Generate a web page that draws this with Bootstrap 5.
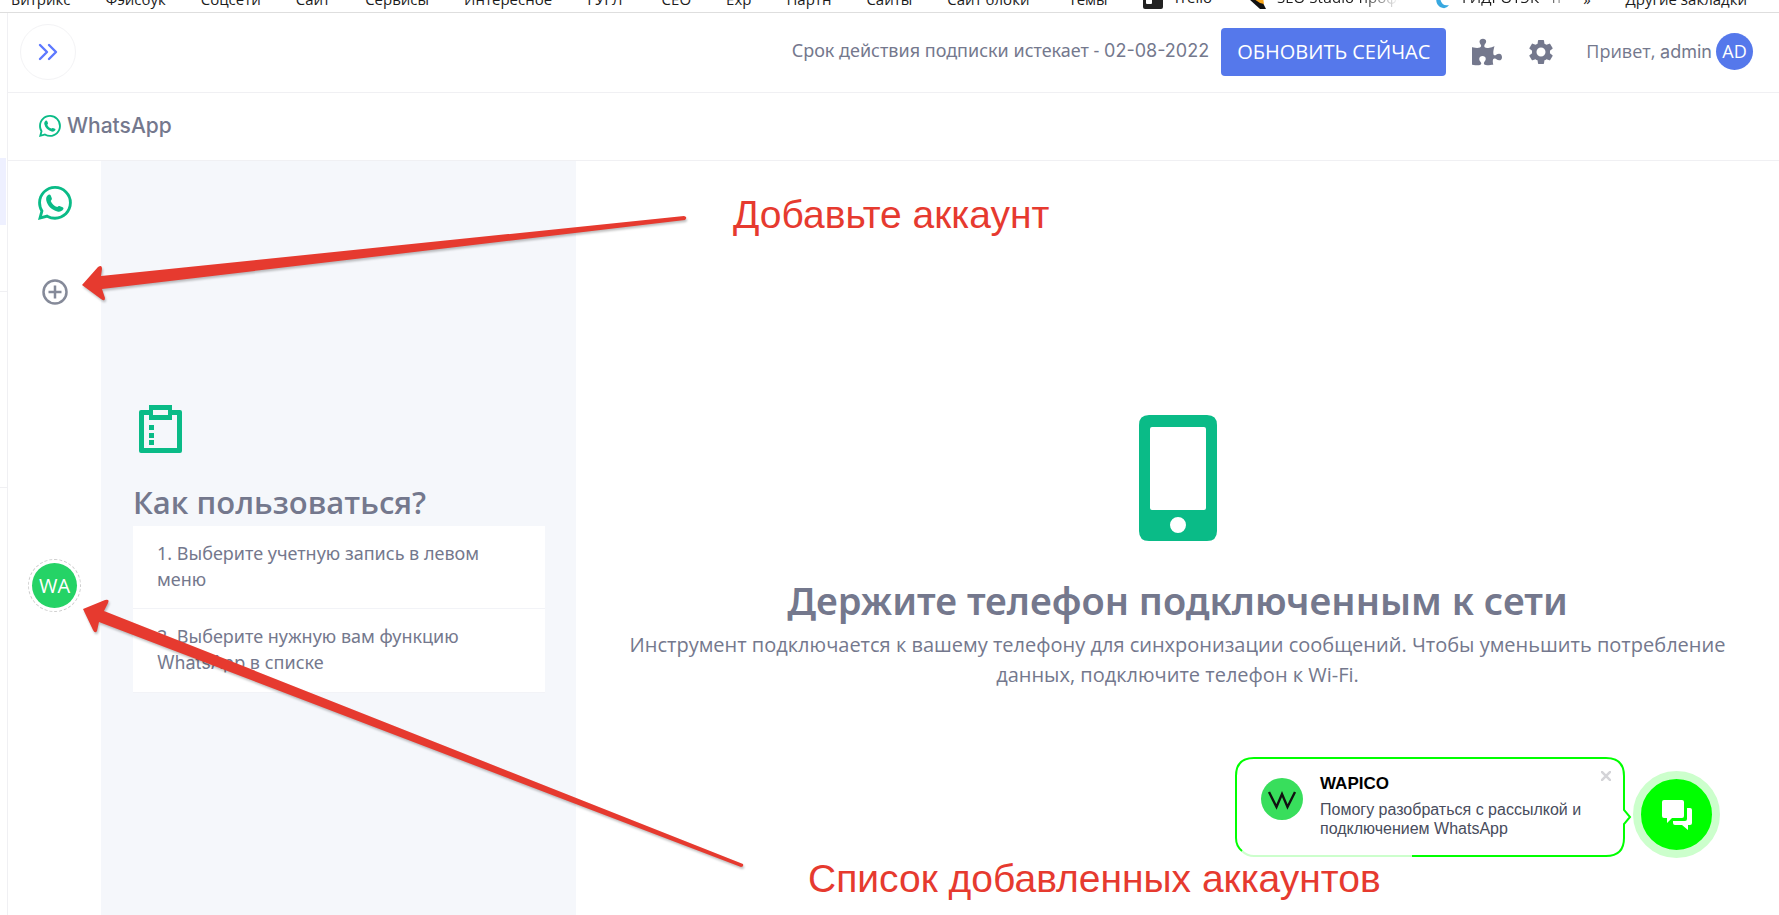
<!DOCTYPE html>
<html lang="ru">
<head>
<meta charset="utf-8">
<meta name="viewport" content="width=device-width, initial-scale=1">
<title>WhatsApp</title>
<link href="https://cdn.jsdelivr.net/npm/bootstrap@5.3.0/dist/css/bootstrap.min.css" rel="stylesheet">
<style>
  :root { --ink: #74788d; --green: #0abb87; --line: #f0f0f3; --red: #e63a2f; --lime: #00ff00; }
  html, body { height: 100%; }
  body { font-family: "Open Sans", "Noto Sans", sans-serif; color: var(--ink); background: #fff; overflow: hidden; position: relative; }
  .latin { font-family: Inter, "Noto Sans", sans-serif; }
  .bookmarks { height: 13px; overflow: hidden; border-bottom: 1px solid #dedede; font-size: 15px; line-height: 20px; padding: 0 32px 0 11px; }
  .bm-group { gap: 35px; }
  .bookmarks a { color: #1c1c1c; text-decoration: none; white-space: nowrap; margin-bottom: 3px; }
  .bookmarks svg { margin-right: 10px; }
  .bookmarks .fade-end { overflow: hidden; -webkit-mask-image: linear-gradient(90deg, #000 75%, transparent); mask-image: linear-gradient(90deg, #000 75%, transparent); }
  .fade-long { width: 152px; }
  .fade-short { width: 142px; }
  .side-edge { width: 8px; border-right: 1px solid var(--line); }
  .edge-gap { height: 145px; }
  .edge-active { height: 67px; background: #eef0ff; margin-right: 1px; }
  .edge-row { border-bottom: 1px solid var(--line); }
  .edge-a { height: 67px; }
  .edge-b { height: 196px; }
  .topbar { height: 80px; border-bottom: 1px solid var(--line); padding: 0 26px 2px 12px; }
  .toggle-btn { width: 56px; height: 56px; border: 1px solid #f3f3f5; border-radius: 50%; background: #fff; }
  .sub-note { font-family: "Noto Sans", sans-serif; font-size: 18px; line-height: 28px; margin-right: 12px; padding-bottom: 3px; }
  .btn-renew { background: #5578eb; color: #fff; font-size: 20px; line-height: 28px; padding: 10px 16px; margin-right: 26px; border: 0; border-radius: 4px; }
  .icon-btn { background: none; border: 0; padding: 0; color: var(--ink); line-height: 0; }
  .hello { font-size: 18px; margin-left: 30px; }
  .ava { width: 37px; height: 37px; border-radius: 50%; background: #5578eb; color: #fff; font-size: 18px; }
  .titlebar { height: 68px; border-bottom: 1px solid var(--line); padding: 0 0 2px 31px; gap: 6px; font-size: 21px; font-weight: 500; }
  .rail { width: 93px; }
  .rail-gap-a { margin-top: 25px; }
  .rail-gap-b { margin-top: 59px; }
  .rail-gap-c { margin-top: 254px; }
  .wa-ava { width: 53px; height: 53px; border: 1px dashed #ccc; border-radius: 50%; padding: 3px; background: #fff; }
  .wa-ava span { width: 45px; height: 45px; border-radius: 50%; background: #25d366; color: #fff; font-size: 20px; }
  .guide { width: 475px; background: #f5f7fb; padding: 240px 31px 0 32px; }
  .guide h2 { font-size: 31px; line-height: 40px; font-weight: 600; margin: 27px 0 4px; }
  .guide .list-group { --bs-list-group-border-color: #f2f3f7; --bs-list-group-color: var(--ink); }
  .guide .list-group-item { padding: 14px 24px 16px; font-family: "Noto Sans", sans-serif; font-size: 18px; line-height: 26px; border-width: 0 0 1px; }
  .phone-pane { padding: 254px 40px 0; }
  .phone-pane h1 { font-family: "Noto Sans", sans-serif; font-size: 38px; line-height: 50px; font-weight: 600; margin: 34px 0 5px; }
  .phone-pane p { font-size: 20px; line-height: 30px; }
  .callout-text { position: absolute; font-family: "Liberation Sans", Arial, sans-serif; color: var(--red); font-size: 39px; line-height: 44px; white-space: nowrap; }
  .note-a { left: 733px; top: 193px; }
  .note-b { left: 808px; top: 857px; }
  .arrows { position: absolute; left: 0; top: 0; pointer-events: none; filter: drop-shadow(1px 2px 1px rgba(0,0,0,.25)); }
  .chat { position: absolute; right: 59px; bottom: 57px; font-family: "Liberation Sans", Arial, sans-serif; }
  .bubble { width: 398px; height: 100px; padding: 17px 26px 0; }
  .bubble > svg.frame { position: absolute; left: 0; top: 0; }
  .bubble-text { margin-left: 17px; }
  .bubble strong { font-size: 17px; line-height: 20px; color: #000; }
  .bubble p { font-size: 16px; line-height: 19px; color: #484c5c; margin: 6px 0 0; white-space: nowrap; }
  .bubble .close-x { position: absolute; right: 22px; top: 14px; }
  .chat-btn { width: 87px; height: 87px; margin-top: 14px; border-radius: 50%; border: 8px solid #ccffcc; background: var(--lime); padding: 0; }
</style>
</head>
<body class="d-flex flex-column">
<svg width="0" height="0" class="position-absolute" aria-hidden="true">
  <symbol id="wa" viewBox="0 0 16 16"><path fill="currentColor" d="M13.601 2.326A7.854 7.854 0 0 0 7.994 0C3.627 0 .068 3.558.064 7.926c0 1.399.366 2.76 1.057 3.965L0 16l4.204-1.102a7.933 7.933 0 0 0 3.79.965h.004c4.368 0 7.926-3.558 7.93-7.93A7.898 7.898 0 0 0 13.6 2.326zM7.994 14.521a6.573 6.573 0 0 1-3.356-.92l-.24-.144-2.494.654.666-2.433-.156-.251a6.56 6.56 0 0 1-1.007-3.505c0-3.626 2.957-6.584 6.591-6.584a6.56 6.56 0 0 1 4.66 1.931 6.557 6.557 0 0 1 1.928 4.66c-.004 3.639-2.961 6.592-6.592 6.592z"/><path fill="currentColor" d="M4.600 4.300c.5-.4 1.200-.3 1.400.2l.5 1.300c.1.400 0 .700-.5 1.200.5 1.300 1.700 2.400 3.100 2.900.4-.5.7-.6 1-.5l1.500.6c.5.200.5.700.2 1.100-.6.900-1.700 1.200-2.700.9C6.400 11.200 4.500 9.300 3.900 6.800c-.2-1 0-1.900.7-2.500z"/></symbol>
</svg>

<nav class="bookmarks d-flex align-items-end flex-shrink-0">
  <div class="bm-group d-flex align-items-end">
    <a href="#">Битрикс</a><a href="#">Фэйсбук</a><a href="#">Соцсети</a><a href="#">Сайт</a><a href="#">Сервисы</a><a href="#">Интересное</a><a href="#">ГУГЛ</a><a href="#" class="ms-1">СЕО</a><a href="#">Exp</a><a href="#">Партн</a><a href="#">Сайты</a><a href="#">Сайт блоки</a><a href="#" class="ms-1">Темы</a>
    <a href="#"><svg width="20" height="20" viewBox="0 0 20 20"><rect width="20" height="20" rx="2" fill="#222"/><rect x="3" y="3" width="6" height="12" rx="1" fill="#fff"/></svg>Trello</a>
    <a href="#" class="fade-end fade-long flex-shrink-0"><svg width="20" height="20" viewBox="0 0 20 20"><path d="M2 10h12l5 10h-6z" fill="#111"/><path d="M4 8h12l1 7-4-1z" fill="#f7a61b"/></svg>SEO Studio-профе</a>
    <a href="#" class="fade-end fade-short flex-shrink-0"><svg width="18" height="20" viewBox="0 0 18 20"><path d="M5 2Q-1 13 6 18q6 3 9-2-8 2-9-8z" fill="#38a8e0"/></svg>ГИДРОТЭК - п</a>
  </div>
  <div class="bm-group d-flex align-items-end ms-auto"><a href="#">»</a><a href="#">Другие закладки</a></div>
</nav>

<div class="d-flex flex-grow-1">
  <aside class="side-edge flex-shrink-0">
    <div class="edge-gap"></div><div class="edge-active"></div>
    <div class="edge-row edge-a"></div><div class="edge-row edge-b"></div>
  </aside>
  <div class="d-flex flex-column flex-grow-1">
    <header class="topbar d-flex align-items-center">
      <button class="toggle-btn d-flex align-items-center justify-content-center" aria-label="Меню">
        <svg width="20" height="18" viewBox="0 0 20 18" fill="none" stroke="#5d78ff" stroke-width="2.400" stroke-linecap="round" stroke-linejoin="round"><path d="M2 2l7 7-7 7M11 2l7 7-7 7"/></svg>
      </button>
      <span class="sub-note ms-auto">Срок действия подписки истекает - <span class="latin">02-08-2022</span></span>
      <button class="btn btn-renew">ОБНОВИТЬ СЕЙЧАС</button>
      <button class="icon-btn" aria-label="Модули"><svg width="30" height="28" viewBox="0 0 576 512" fill="currentColor"><path d="M519.442 288.651c-41.519 0-59.500 31.593-82.058 31.593C377.409 320.244 432 144 432 144s-196.288 80-196.288-3.297c0-35.827 36.288-46.250 36.288-85.985C272 19.216 243.885 0 210.539 0c-34.654 0-66.366 18.891-66.366 56.346 0 41.364 31.711 59.277 31.711 81.750C175.885 207.719 0 166.758 0 166.758v333.237s178.635 41.047 178.635-28.662c0-22.473-40-40.107-40-81.471 0-37.456 29.250-56.346 63.577-56.346 33.673 0 61.788 19.216 61.788 54.717 0 39.735-36.288 50.158-36.288 85.985 0 60.803 129.675 25.730 181.230 25.730 0 0-34.725-120.101 25.827-120.101 35.962 0 46.423 36.152 86.308 36.152C556.712 416 576 387.990 576 354.443c0-34.199-18.962-65.792-56.558-65.792z"/></svg></button>
      <button class="icon-btn ms-4" aria-label="Настройки"><svg width="30" height="30" viewBox="0 0 24 24" fill="currentColor"><path d="M19.140 12.940c.040-.3.060-.610.060-.940s-.020-.640-.070-.940l2.030-1.580a.49.49 0 0 0 .120-.610l-1.920-3.320a.488.488 0 0 0-.590-.220l-2.390.960c-.5-.380-1.030-.7-1.620-.940l-.360-2.540a.484.484 0 0 0-.480-.410h-3.840c-.240 0-.430.170-.470.410l-.360 2.540c-.590.240-1.130.570-1.620.940l-2.390-.960c-.220-.080-.470 0-.590.220L2.740 8.870c-.120.210-.080.470.120.610l2.030 1.580c-.050.3-.090.630-.090.940s.020.640.070.940l-2.030 1.580a.49.49 0 0 0-.120.610l1.920 3.320c.120.220.370.290.590.220l2.390-.960c.5.380 1.030.7 1.620.940l.360 2.540c.050.240.240.410.480.410h3.840c.240 0 .440-.170.470-.410l.360-2.540c.590-.240 1.130-.560 1.620-.940l2.390.960c.220.080.470 0 .590-.220l1.920-3.320c.120-.220.070-.470-.120-.610l-2.010-1.580zM12 15.600A3.610 3.610 0 0 1 8.400 12 3.610 3.610 0 0 1 12 8.400a3.610 3.610 0 0 1 3.600 3.600 3.610 3.610 0 0 1-3.600 3.600z"/></svg></button>
      <a href="#" class="hello d-flex align-items-center text-reset text-decoration-none"><span>Привет, <span class="latin">admin</span></span><span class="ava d-flex align-items-center justify-content-center ms-1">AD</span></a>
    </header>
    <div class="titlebar d-flex align-items-center latin"><svg width="22" height="22" color="#0abb87"><use href="#wa"/></svg>WhatsApp</div>

    <main class="d-flex flex-grow-1">
      <nav class="rail d-flex flex-column align-items-center flex-shrink-0">
        <button class="icon-btn rail-gap-a" aria-label="WhatsApp"><svg width="34" height="34" color="#0abb87"><use href="#wa"/></svg></button>
        <button class="icon-btn rail-gap-b" aria-label="Добавить аккаунт"><svg width="26" height="26" viewBox="0 0 26 26" fill="none" stroke="#858a99" stroke-width="2.500"><circle cx="13" cy="13" r="11.500"/><path d="M13 6.500v13M6.500 13h13"/></svg></button>
        <button class="wa-ava rail-gap-c"><span class="d-flex align-items-center justify-content-center">WA</span></button>
      </nav>
      <section class="guide flex-shrink-0">
        <svg class="d-block ms-1" width="50" height="54" viewBox="0 0 50 54" fill="#0abb87"><path fill-rule="evenodd" d="M12 4h23v5h8q2 0 2 2v39q0 2-2 2H4q-2 0-2-2V11q0-2 2-2h8zM16 9v5h15V9zM7 14v33h33V14h-5v5H12v-5z"/><path d="M12 24h5v5h-5zM12 32h5v5h-5zM12 39h5v5h-5z"/></svg>
        <h2>Как пользоваться?</h2>
        <ul class="list-group rounded-0">
          <li class="list-group-item">1. Выберите учетную запись в левом меню</li>
          <li class="list-group-item">2. Выберите нужную вам функцию <span class="latin">WhatsApp</span> в списке</li>
        </ul>
      </section>
      <section class="phone-pane flex-grow-1 text-center">
        <svg width="78" height="126" viewBox="0 0 78 126"><path fill="#0abb87" fill-rule="evenodd" d="M10 0h58q10 0 10 10v106q0 10-10 10H10q-10 0-10-10V10Q0 0 10 0zM13 12q-2 0-2 2v79q0 2 2 2h52q2 0 2-2V14q0-2-2-2zM39 102a8 8 0 1 0 0 16 8 8 0 0 0 0-16z"/></svg>
        <h1>Держите телефон подключенным к сети</h1>
        <p>Инструмент подключается к вашему телефону для синхронизации сообщений. Чтобы уменьшить потребление данных, подключите телефон к Wi-Fi.</p>
      </section>
    </main>
  </div>
</div>

<svg class="arrows" width="760" height="900" viewBox="0 0 760 900" fill="#e63a2f">
  <path d="M82 285 98 267q4-3 4 2l-1 7 583-60q4 1 1 4L102 289l3 9q0 4-4 1z"/>
  <path d="M83 609 105 600q5-1 3 3l-4 8 639 253q1 3-2 3L99 622l-2 9q-2 3-4-1z"/>
</svg>
<div class="callout-text note-a">Добавьте аккаунт</div>
<div class="callout-text note-b">Список добавленных аккаунтов</div>

<div class="chat d-flex align-items-start">
  <div class="bubble position-relative d-flex">
    <svg class="frame" width="398" height="100" viewBox="0 0 398 100" fill="none" stroke="#00ff00" stroke-width="2"><path fill="#fff" stroke="#ccffcc" d="M7 94q5 5 12 5H178"/><path d="M177 99H371q18 0 18-18V67l6-7-6-7V19q0-18-18-18H19Q1 1 1 19v62q0 8 6 13"/></svg>
    <svg width="42" height="42" viewBox="0 0 42 42" class="flex-shrink-0 mt-1"><circle cx="21" cy="21" r="21" fill="#38de5c"/><path d="M8 14l7.500 15L21 16l5.500 13L34 14" fill="none" stroke="#111" stroke-width="2.400"/></svg>
    <div class="bubble-text"><strong class="d-block">WAPICO</strong><p>Помогу разобраться с рассылкой и<br>подключением WhatsApp</p></div>
    <button class="icon-btn close-x" aria-label="Закрыть"><svg width="10" height="10" viewBox="0 0 10 10" stroke="#d4d4d8" stroke-width="2.500"><path d="M0 0l10 10M10 0L0 10"/></svg></button>
  </div>
  <button class="chat-btn d-flex align-items-center justify-content-center" aria-label="Чат">
    <svg width="32" height="32" viewBox="0 0 32 32" fill="#fff"><path d="M3 1h18q2 0 2 2v14q0 2-2 2H11l-5 5v-5H3q-2 0-2-2V3q0-2 2-2z"/><path d="M26 9h3q2 0 2 2v13q0 2-2 2h-2v5l-6-5h-7q-2 0-2-2v-2h12q2 0 2-2z"/></svg>
  </button>
</div>
<script src="https://cdn.jsdelivr.net/npm/bootstrap@5.3.0/dist/js/bootstrap.bundle.min.js"></script>
</body>
</html>
